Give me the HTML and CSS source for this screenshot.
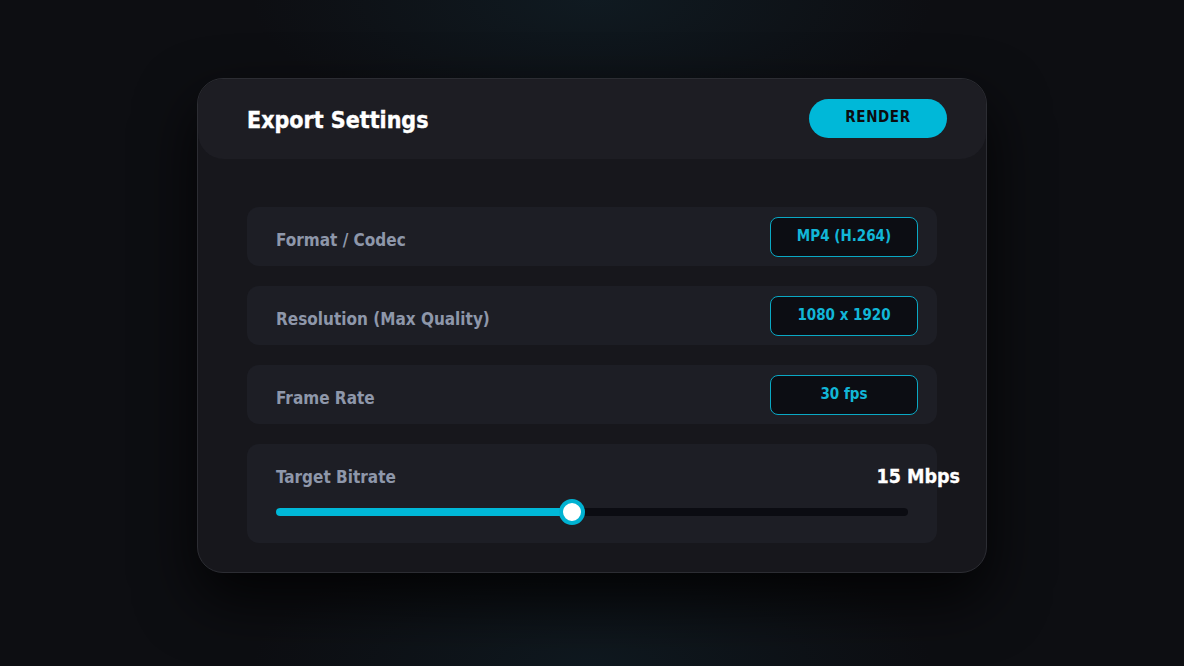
FILE: index.html
```html
<!DOCTYPE html>
<html lang="en">
<head>
<meta charset="utf-8">
<title>Export Settings</title>
<link rel="stylesheet" href="styles.css">
</head>
<body>
<main class="stage">
  <section class="card">
    <header class="card-header">
      <h1 class="title">Export Settings</h1>
      <button class="render-btn">RENDER</button>
    </header>
    <div class="rows">
      <div class="row">
        <span class="label">Format / Codec</span>
        <span class="pill">MP4 (H.264)</span>
      </div>
      <div class="row">
        <span class="label">Resolution (Max Quality)</span>
        <span class="pill">1080 x 1920</span>
      </div>
      <div class="row">
        <span class="label">Frame Rate</span>
        <span class="pill">30 fps</span>
      </div>
      <div class="row row-slider">
        <div class="slider-head">
          <span class="label">Target Bitrate</span>
          <span class="value">15 Mbps</span>
        </div>
        <div class="track">
          <div class="fill" style="width: 46.8%"></div>
          <div class="thumb"></div>
        </div>
      </div>
    </div>
  </section>
</main>
</body>
</html>
```

FILE: styles.css
```css
* { box-sizing: border-box; }
html, body { margin: 0; padding: 0; }
body {
  width: 1184px;
  height: 666px;
  overflow: hidden;
  font-family: "DejaVu Sans Condensed", "DejaVu Sans", Verdana, sans-serif;
  background-color: #0d0e12;
  background-image:
    radial-gradient(ellipse 340px 130px at 592px 0px, rgba(18, 38, 48, 0.5), rgba(18, 38, 48, 0) 100%),
    radial-gradient(ellipse 340px 130px at 592px 666px, rgba(18, 38, 48, 0.45), rgba(18, 38, 48, 0) 100%);
}
.stage {
  height: 666px;
  display: flex;
  justify-content: center;
  align-items: flex-start;
  padding-top: 78px;
}
.card {
  width: 790px;
  height: 495px;
  background: #17171c;
  border: 1px solid #2c2d33;
  border-radius: 26px;
  box-shadow: 0 26px 60px rgba(0, 0, 0, 0.8);
  overflow: hidden;
}
.card-header {
  height: 80px;
  background: #1d1d23;
  border-radius: 0 0 26px 26px;
  display: flex;
  align-items: center;
  justify-content: space-between;
  padding: 0 39px 0 49px;
}
.title {
  margin: 0;
  color: #ffffff;
  font-size: 23px;
  font-weight: bold;
  -webkit-text-stroke: 0.4px #ffffff;
  position: relative;
  top: 1px;
}
.render-btn {
  width: 138px;
  height: 39px;
  border: none;
  border-radius: 20px;
  background: #00b8d8;
  color: #0c0d10;
  font-family: inherit;
  font-size: 15px;
  font-weight: bold;
  letter-spacing: 0.6px;
  padding: 0 0 3px;
  margin-top: -1px;
}
.rows {
  display: flex;
  flex-direction: column;
  gap: 20px;
  padding: 48px 49px 0;
}
.row {
  height: 59px;
  background: #1d1e25;
  border-radius: 12px;
  display: flex;
  align-items: center;
  justify-content: space-between;
  padding: 0 19px 0 29px;
}
.label {
  color: #8e97aa;
  font-size: 17px;
  font-weight: bold;
  position: relative;
  top: 3px;
}
.pill {
  width: 148px;
  height: 40px;
  border: 1px solid #0aa8c4;
  border-radius: 8px;
  background: #0c0d13;
  color: #12b6d7;
  font-size: 15px;
  font-weight: bold;
  display: flex;
  align-items: center;
  justify-content: center;
  padding-bottom: 2px;
}
.row-slider {
  height: 99px;
  flex-direction: column;
  align-items: stretch;
  justify-content: flex-start;
  padding: 21px 29px 0 29px;
}
.slider-head {
  display: flex;
  justify-content: space-between;
  align-items: center;
  margin-right: -52px;
}
.slider-head .label { top: 0; }
.value {
  color: #ffffff;
  font-size: 19.5px;
  font-weight: bold;
  -webkit-text-stroke: 0.3px #ffffff;
}
.track {
  position: relative;
  height: 8px;
  margin-top: 20px;
  background: #0b0c12;
  border-radius: 4px;
}
.fill {
  height: 8px;
  background: #00b8d8;
  border-radius: 4px;
}
.thumb {
  position: absolute;
  left: calc(46.8% - 13px);
  top: -9px;
  width: 26px;
  height: 26px;
  border-radius: 50%;
  background: #ffffff;
  border: 4px solid #00b2d2;
}
```
